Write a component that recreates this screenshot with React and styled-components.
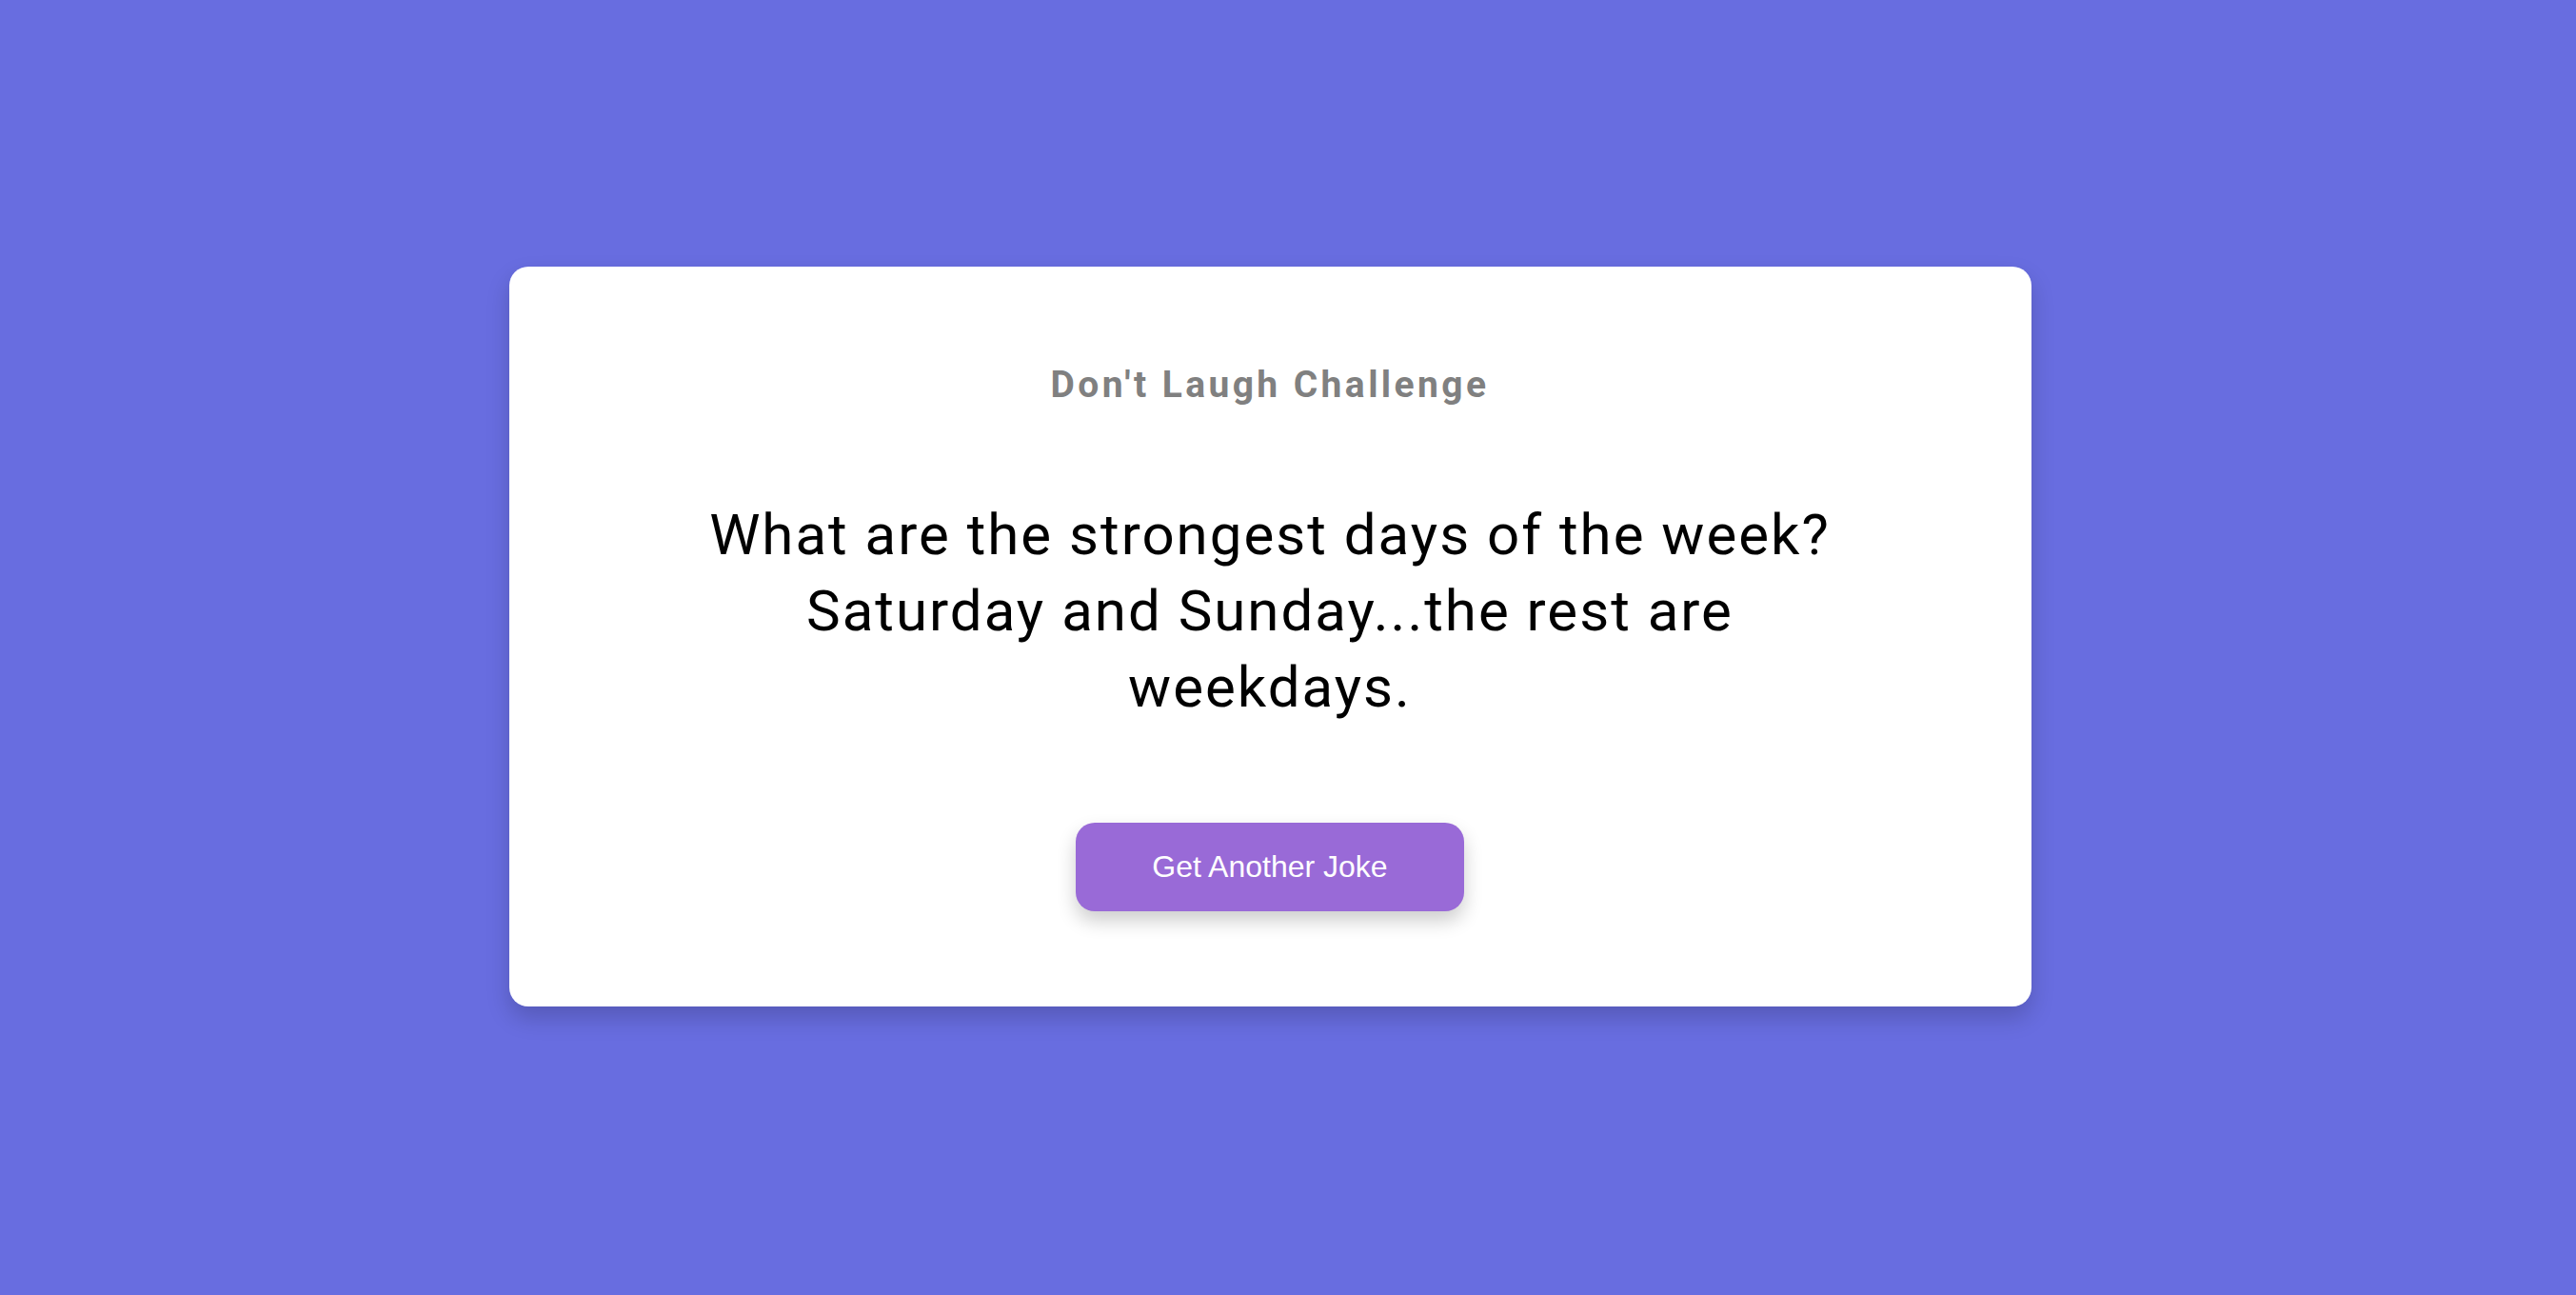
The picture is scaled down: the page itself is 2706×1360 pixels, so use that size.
import React from 'react';
import styled, { createGlobalStyle } from 'styled-components';

const GlobalStyle = createGlobalStyle`
  * { box-sizing: border-box; }
  html, body {
    margin: 0;
    padding: 0;
    background-color: #686de0;
  }
`;

const Page = styled.div`
  min-height: 100vh;
  display: flex;
  justify-content: center;
  align-items: center;
  padding: 0 38px 23px 0;
  background-color: #686de0;
`;

const Card = styled.div`
  width: 1599px;
  height: 777px;
  background: #ffffff;
  border-radius: 20px;
  box-shadow: 0 12px 24px rgba(0, 0, 0, 0.18);
  display: flex;
  flex-direction: column;
  align-items: center;
  padding-top: 101px;
  text-align: center;
`;

const Titulo = styled.h3`
  margin: 0;
  font-family: Roboto, "Liberation Sans", sans-serif;
  font-weight: 700;
  font-size: 39px;
  letter-spacing: 3.4px;
  color: #808080;
`;

const Joke = styled.p`
  margin: 95px 0 0;
  max-width: 1200px;
  font-family: Roboto, "Liberation Sans", sans-serif;
  font-weight: 400;
  font-size: 60px;
  line-height: 80px;
  letter-spacing: 2px;
  color: #000000;
`;

const Botao = styled.button`
  margin-top: 102px;
  width: 408px;
  height: 93px;
  border: none;
  border-radius: 20px;
  background-color: #996ad7;
  color: #ffffff;
  font-family: "Liberation Sans", Arial, sans-serif;
  font-size: 32px;
  cursor: pointer;
  box-shadow: 0 10px 20px rgba(0, 0, 0, 0.2);
`;

export default function App() {
  return (
    <>
      <GlobalStyle />
      <Page>
        <Card>
          <Titulo>Don't Laugh Challenge</Titulo>
          <Joke>
            What are the strongest days of the week? Saturday and Sunday...the rest are weekdays.
          </Joke>
          <Botao>Get Another Joke</Botao>
        </Card>
      </Page>
    </>
  );
}
